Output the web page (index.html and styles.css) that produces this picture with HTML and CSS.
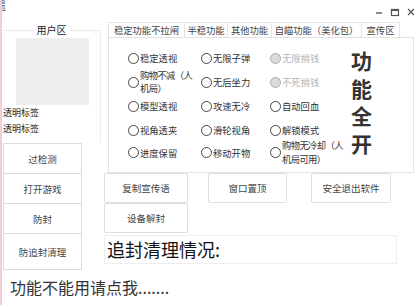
FILE: index.html
```html
<!DOCTYPE html>
<html lang="zh-CN">
<head>
    <meta charset="UTF-8">
    <meta name="viewport" content="width=device-width, initial-scale=1.0">
    <title>功能面板</title>
    <link rel="stylesheet" href="styles.css">
</head>
<body>
    <div class="window">
        <div class="titlebar">
            <span class="cut-text">遗</span>
            <div class="controls">
                <svg class="ctl" width="10" height="10" viewBox="0 0 10 10"><line x1="2" y1="6" x2="8" y2="6" stroke="#555" stroke-width="1.4"/></svg>
                <svg class="ctl" width="10" height="10" viewBox="0 0 10 10"><rect x="1.5" y="2.5" width="7" height="6" fill="none" stroke="#555" stroke-width="1.2"/><line x1="1.5" y1="3" x2="8.5" y2="3" stroke="#555" stroke-width="2"/></svg>
                <svg class="ctl" width="10" height="10" viewBox="0 0 10 10"><path d="M2 2 L8 8 M8 2 L2 8" stroke="#555" stroke-width="1.2"/></svg>
            </div>
        </div>

        <div class="main">
            <div class="left">
                <div class="userbox">
                    <div class="userbox-title">用户区</div>
                    <div class="avatar"></div>
                    <div class="label">透明标签</div>
                    <div class="label">透明标签</div>
                </div>
                <button class="side-btn">过检测</button>
                <button class="side-btn">打开游戏</button>
                <button class="side-btn">防封</button>
                <button class="side-btn tall">防追封清理</button>
            </div>

            <div class="right">
                <div class="tabs">
                    <div class="tab-head">
                        <div class="tab" style="width: 77px">稳定功能不拉闸</div>
                        <div class="tab" style="width: 44px">半稳功能</div>
                        <div class="tab" style="width: 45px">其他功能</div>
                        <div class="tab" style="width: 91px">自瞄功能（美化包）</div>
                        <div class="tab" style="width: 39px">宣传区</div>
                    </div>
                    <div class="tab-panel">
                        <div class="opt"><span class="dot"></span>稳定透视</div>
                        <div class="opt"><span class="dot"></span>无限子弹</div>
                        <div class="opt off"><span class="dot"></span>无限捐钱</div>
                        <div class="big">功<br>能<br>全<br>开</div>

                        <div class="opt"><span class="dot"></span><span class="two">购物不减（人<br>机局）</span></div>
                        <div class="opt"><span class="dot"></span>无后坐力</div>
                        <div class="opt off"><span class="dot"></span>不死捐钱</div>

                        <div class="opt"><span class="dot"></span>模型透视</div>
                        <div class="opt"><span class="dot"></span>攻速无冷</div>
                        <div class="opt"><span class="dot"></span>自动回血</div>

                        <div class="opt"><span class="dot"></span>视角透夹</div>
                        <div class="opt"><span class="dot"></span>滑轮视角</div>
                        <div class="opt"><span class="dot"></span>解锁模式</div>

                        <div class="opt"><span class="dot"></span>进度保留</div>
                        <div class="opt"><span class="dot"></span>移动开物</div>
                        <div class="opt"><span class="dot"></span><span class="two">购物无冷却（人<br>机局可用）</span></div>
                    </div>
                </div>

                <div class="btn-row">
                    <button class="act-btn wide">复制宣传语</button>
                    <button class="act-btn mid">窗口置顶</button>
                    <button class="act-btn">安全退出软件</button>
                </div>
                <div class="btn-row">
                    <button class="act-btn wide">设备解封</button>
                </div>
                <div class="status">追封清理情况:</div>
            </div>
        </div>

        <div class="footer">功能不能用请点我.......</div>
    </div>
</body>
</html>
```

FILE: styles.css
```css
body {
    margin: 0;
    background-color: #fff;
    font-family: "Noto Sans CJK SC", "Noto Sans", sans-serif;
    color: #333;
}

.window {
    width: 418px;
    height: 305px;
    border-left: 2px solid #f6cbd9;
    overflow: hidden;
}

.titlebar {
    height: 20px;
    display: flex;
    justify-content: space-between;
    align-items: flex-start;
}

.cut-text {
    font-size: 11px;
    line-height: 10px;
    margin-left: -7px;
    color: #555;
}

.controls {
    display: flex;
    gap: 6px;
    margin-top: 7px;
    margin-right: 4px;
}

.main {
    display: flex;
}

.left {
    width: 98px;
    margin-left: 1px;
    padding-top: 10px;
    display: flex;
    flex-direction: column;
}

.userbox {
    height: 113px;
    border-top: 1px solid #ececec;
    border-right: 1px solid #ececec;
    box-sizing: border-box;
}

.userbox-title {
    width: 36px;
    margin: -8px auto 1px;
    background-color: #fff;
    text-align: center;
    font-size: 10px;
    line-height: 14px;
    color: #222;
}

.avatar {
    width: 73px;
    height: 67px;
    margin-left: 13px;
    background-color: #efefef;
}

.label {
    font-size: 9px;
    line-height: 16px;
    color: #222;
}

.label:first-of-type {
    margin-top: 5px;
}

.side-btn {
    width: 79px;
    height: 31px;
    margin: -1px 0 0 0;
    border: 1px solid #dcdcdc;
    background-color: #fff;
    font-family: inherit;
    font-size: 9.5px;
    color: #444;
    padding: 0;
}

.side-btn:first-of-type {
    margin-top: 0;
}

.side-btn.tall {
    height: 37px;
}

.right {
    margin-left: 3px;
    display: flex;
    flex-direction: column;
}

.tabs {
    margin-left: 4px;
    margin-top: 2px;
    width: 306px;
}

.tab-head {
    display: flex;
    height: 15px;
    border-bottom: 1px solid #e2e2e2;
}

.tab {
    box-sizing: border-box;
    border: 1px solid #e4e4e4;
    border-bottom: none;
    margin-right: -1px;
    text-align: center;
    font-size: 9.3px;
    line-height: 14px;
    color: #444;
    white-space: nowrap;
}

.tab-panel {
    height: 135px;
    box-sizing: border-box;
    border: 1px solid #e4e4e4;
    border-top: none;
    padding: 8px 0 0 19px;
    display: grid;
    grid-template-columns: 73px 69px 82px auto;
    grid-template-rows: 24px 24px 24px 24px 21px;
}

.opt {
    display: flex;
    align-items: center;
    font-size: 9.3px;
    color: #333;
    white-space: nowrap;
}

.dot {
    width: 9px;
    height: 9px;
    border: 1px solid #444;
    border-radius: 50%;
    margin-right: 1px;
    flex-shrink: 0;
}

.two {
    line-height: 13.5px;
    letter-spacing: -0.6px;
}

.opt.off {
    color: #b5b5b5;
}

.opt.off .dot {
    border-color: #aaa;
    background-color: #dcdcdc;
}

.big {
    grid-column: 4;
    grid-row: 1 / span 5;
    font-size: 21px;
    font-weight: bold;
    line-height: 27.5px;
    color: #333;
    margin-top: 1px;
    margin-left: -1px;
}

.btn-row {
    display: flex;
}

.btn-row:first-of-type {
    margin-top: 8px;
}

.act-btn {
    width: 80px;
    height: 30px;
    margin-right: 0;
    border: 1px solid #dedede;
    border-radius: 2px;
    background-color: #fff;
    font-family: inherit;
    font-size: 9.5px;
    color: #444;
    padding: 0;
}

.act-btn.wide {
    width: 84px;
    margin-right: 20px;
}

.act-btn.mid {
    width: 79px;
    margin-right: 24px;
}

.status {
    width: 293px;
    height: 29px;
    margin-top: 2px;
    box-sizing: border-box;
    border: 1px solid #eeeeee;
    padding-left: 2px;
    font-size: 18px;
    line-height: 27px;
    color: #111;
}

.footer {
    margin-top: 7px;
    padding-left: 8px;
    font-size: 16px;
    line-height: 20px;
    color: #333;
}
```
